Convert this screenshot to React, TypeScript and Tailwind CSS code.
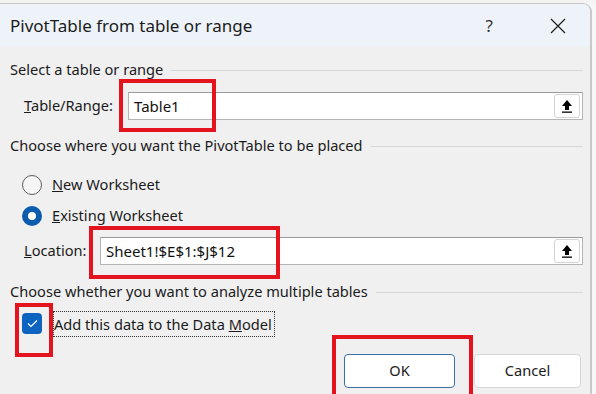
import React from 'react'

const font = { fontFamily: '"Noto Sans", "Segoe UI", sans-serif' }

function SectionHeader({ children, mt }: { children: React.ReactNode; mt: string }) {
  return (
    <div className={`flex items-center h-[24px] ${mt}`}>
      <span className="whitespace-nowrap">{children}</span>
      <div className="flex-1 ml-[8px] mr-[6px] border-t border-[#d9d9d9]" />
    </div>
  )
}

function RefButton() {
  return (
    <div className="w-[26px] h-[24px] mr-[2px] bg-white border border-[#d4d4d4] rounded-[3px] flex items-center justify-center">
      <svg width="12" height="14" viewBox="0 0 12 14">
        <path d="M6 1 L11 7 L8 7 L8 11 L4 11 L4 7 L1 7 Z" fill="#000" />
        <rect x="1" y="12.5" width="10" height="1.3" fill="#000" />
      </svg>
    </div>
  )
}

function Field({ value }: { value: string }) {
  return (
    <div className="flex items-center h-[28px] w-full bg-white border border-[#b4b4b4] border-t-[#9a9a9a]">
      <span className="flex-1 pl-[5px] text-[15px] text-[#111]">{value}</span>
      <RefButton />
    </div>
  )
}

function Radio({ checked }: { checked?: boolean }) {
  if (checked)
    return (
      <div className="w-[20px] h-[20px] rounded-full bg-[#0b5cad] flex items-center justify-center">
        <div className="w-[8px] h-[8px] rounded-full bg-white" />
      </div>
    )
  return <div className="w-[20px] h-[20px] rounded-full border border-[#5f5f5f] bg-[#f5f5f5]" />
}

export default function App() {
  return (
    <div className="relative w-[596px] h-[394px] overflow-hidden bg-[#f7f7f7] text-[#1b1b1b]" style={font}>
      <div className="h-[3px] bg-[#f3f3f3]" />
      <div className="flex flex-col h-[391px] w-[592px] border-r-2 border-t border-[#c9c9c9] rounded-tr-[9px] overflow-hidden bg-[#f0f0f0]">
        {/* title bar */}
        <div className="flex items-center h-[43px] bg-[#eef3f9] shrink-0">
          <span className="pl-[10px] text-[17px] flex-1">PivotTable from table or range</span>
          <span className="text-[17px] text-[#333] mr-[57px]">?</span>
          <svg width="16" height="16" viewBox="0 0 16 16" className="mr-[24px]">
            <path d="M1 1 L15 15 M15 1 L1 15" stroke="#222" strokeWidth="1.3" />
          </svg>
        </div>

        <div className="flex flex-col pl-[10px] pr-[1px] text-[14.6px]">
          <SectionHeader mt="mt-[11px]">Select a table or range</SectionHeader>

          <div className="flex items-center h-[28px] mt-[10px] pr-[6px]">
            <span className="w-[118px] pl-[14px] shrink-0">
              <u>T</u>able/Range:
            </span>
            <Field value="Table1" />
          </div>

          <SectionHeader mt="mt-[14px]">Choose where you want the PivotTable to be placed</SectionHeader>

          <div className="flex items-center h-[24px] mt-[15px] pl-[12px] gap-[10px]">
            <Radio />
            <span>
              <u>N</u>ew Worksheet
            </span>
          </div>
          <div className="flex items-center h-[24px] mt-[7px] pl-[12px] gap-[10px]">
            <Radio checked />
            <span>
              <u>E</u>xisting Worksheet
            </span>
          </div>

          <div className="flex items-center h-[28px] mt-[9px] pr-[6px]">
            <span className="w-[90px] pl-[14px] shrink-0">
              <u>L</u>ocation:
            </span>
            <Field value="Sheet1!$E$1:$J$12" />
          </div>

          <SectionHeader mt="mt-[15px]">Choose whether you want to analyze multiple tables</SectionHeader>

          <div className="flex items-center h-[25px] mt-[7px] pl-[12px]">
            <div className="w-[20px] h-[21px] rounded-[4px] bg-[#0f63c0] flex items-center justify-center">
              <svg width="11" height="9" viewBox="0 0 11 9">
                <path d="M1 4.5 L4 7.5 L10 1.5" stroke="#fff" strokeWidth="1.2" fill="none" />
              </svg>
            </div>
            <span className="ml-[11px] h-[26px] leading-[24px] inline-block pr-[2px] border border-dotted border-[#333] whitespace-nowrap">
              Add this data to the Data <u>M</u>odel
            </span>
          </div>

          <div className="flex justify-end gap-[19px] mt-[18px] pr-[8px]">
            <div className="w-[111px] h-[34px] bg-white border border-[#3d6fa5] rounded-[4px] flex items-center justify-center">
              OK
            </div>
            <div className="w-[107px] h-[34px] bg-white border border-[#d6d6d6] rounded-[4px] flex items-center justify-center">
              Cancel
            </div>
          </div>
        </div>
      </div>

      {/* red annotation boxes */}
      <div className="absolute left-[119px] top-[79px] w-[97px] h-[53px] border-4 border-[#e3141e]" />
      <div className="absolute left-[89px] top-[226px] w-[191px] h-[53px] border-4 border-[#e3141e]" />
      <div className="absolute left-[15px] top-[303px] w-[38px] h-[54px] border-4 border-[#e3141e]" />
      <div className="absolute left-[332px] top-[335px] w-[141px] h-[64px] border-4 border-[#e3141e]" />
    </div>
  )
}
